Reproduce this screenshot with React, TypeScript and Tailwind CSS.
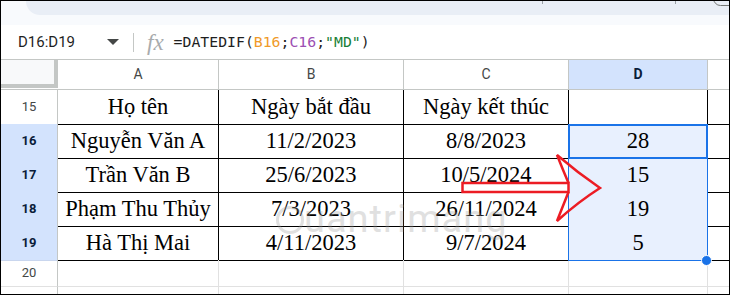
const ui = { fontFamily: 'Roboto, "Noto Sans", Arial, sans-serif' };
const serif = { fontFamily: '"Liberation Serif", "Times New Roman", serif' };
const mono = { fontFamily: '"DejaVu Sans Mono", "Liberation Mono", monospace' };

type Row = { n: number; a: string; b: string; c: string; d: string; sel?: boolean };

const rows: Row[] = [
  { n: 15, a: 'Họ tên', b: 'Ngày bắt đầu', c: 'Ngày kết thúc', d: '' },
  { n: 16, a: 'Nguyễn Văn A', b: '11/2/2023', c: '8/8/2023', d: '28', sel: true },
  { n: 17, a: 'Trần Văn B', b: '25/6/2023', c: '10/5/2024', d: '15', sel: true },
  { n: 18, a: 'Phạm Thu Thủy', b: '7/3/2023', c: '26/11/2024', d: '19', sel: true },
  { n: 19, a: 'Hà Thị Mai', b: '4/11/2023', c: '9/7/2024', d: '5', sel: true },
];

const cols = 'grid grid-cols-[57px_161px_185px_165px_139px_1fr]';

function FormulaBar() {
  return (
    <div className="h-[35px] flex items-center border-b border-[#c4c7c5] bg-white" style={ui}>
      <span className="ml-[17px] w-[88px] text-[15px] text-[#1f1f1f]">D16:D19</span>
      <svg width="12" height="6" viewBox="0 0 12 6" className="ml-[1px]">
        <path d="M0 0 L12 0 L6 6 Z" fill="#444746" />
      </svg>
      <div className="ml-[14px] w-px h-[19px] bg-[#c4c7c5]" />
      <span className="ml-[13px] text-[23px] italic text-[#a8abad] leading-none" style={serif}>
        fx
      </span>
      <span className="ml-[10px] text-[14.8px] text-[#1f1f1f] whitespace-pre" style={mono}>
        =DATEDIF(<span className="text-[#ef9a2a]">B16</span>;<span className="text-[#9c4fb3]">C16</span>;
        <span className="text-[#188038]">"MD"</span>)
      </span>
    </div>
  );
}

function HeaderRow() {
  const letters = ['A', 'B', 'C', 'D'];
  return (
    <div className={`${cols} h-[30px] border-b border-[#c4c7c5]`} style={ui}>
      <div className="bg-[#f8f9fa] border-r-4 border-b-4 border-[#c4c7c5] mb-[1px]" />
      {letters.map((l) => (
        <div
          key={l}
          className={
            l === 'D'
              ? 'flex items-center justify-center border-r border-[#c4c7c5] bg-[#d3e3fd] text-[14px] font-bold text-[#0b1d3a]'
              : 'flex items-center justify-center border-r border-[#c4c7c5] bg-white text-[14px] text-[#444746]'
          }
        >
          {l}
        </div>
      ))}
      <div className="bg-white" />
    </div>
  );
}

function BodyRow({ r }: { r: Row }) {
  const cell = 'flex items-center justify-center border-r border-b border-black text-[22.5px] text-black whitespace-nowrap';
  return (
    <div className={`${cols} h-[34px]`}>
      <div
        className={
          r.sel
            ? 'flex items-center justify-center bg-[#d3e3fd] border-r border-b border-r-[#c4c7c5] border-b-[#c9d6ee] text-[13px] font-bold text-[#0b1d3a]'
            : 'flex items-center justify-center bg-white border-r border-b border-r-[#c4c7c5] border-b-[#e1e1e1] text-[13px] text-[#444746]'
        }
        style={ui}
      >
        {r.n}
      </div>
      <div className={cell} style={serif}>{r.a}</div>
      <div className={cell} style={serif}>{r.b}</div>
      <div className={cell} style={serif}>{r.c}</div>
      <div className={`${cell} ${r.sel ? 'bg-[#e8f0fe]' : 'bg-white'}`} style={serif}>
        {r.d}
      </div>
      <div className="border-b border-black" />
    </div>
  );
}

function EmptyRow({ n, h }: { n: number; h: string }) {
  return (
    <div className={`${cols} ${h}`}>
      <div
        className="flex items-center justify-center border-r border-b border-r-[#c4c7c5] border-b-[#e1e1e1] text-[13px] text-[#444746]"
        style={ui}
      >
        {n}
      </div>
      <div className="border-r border-b border-[#e1e1e1]" />
      <div className="border-r border-b border-[#e1e1e1]" />
      <div className="border-r border-b border-[#e1e1e1]" />
      <div className="border-r border-b border-[#e1e1e1]" />
      <div className="border-b border-[#e1e1e1]" />
    </div>
  );
}

export default function App() {
  return (
    <div className="relative w-[730px] h-[295px] border border-black overflow-hidden bg-white">
      {/* toolbar strip */}
      <div className="relative h-[24px] bg-[#f8fafd]">
        <div className="ml-[25px] h-[14px] bg-[#e9eef6] rounded-bl-[14px]" />
        <div className="absolute left-[541px] top-0 w-px h-[3px] bg-[#9aa0a6]" />
        <div className="absolute left-[674px] top-0 w-px h-[3px] bg-[#9aa0a6]" />
        <div className="absolute left-[712px] top-[-10px] w-[30px] h-[15px] rounded-[8px] border border-[#747775]" />
      </div>
      <FormulaBar />
      <HeaderRow />
      {rows.map((r) => (
        <BodyRow key={r.n} r={r} />
      ))}
      <EmptyRow n={20} h="h-[27px]" />
      <EmptyRow n={21} h="h-[27px]" />

      {/* overlays in page coordinates */}
      <div className="absolute left-[-1px] top-[-1px] w-[730px] h-[295px] pointer-events-none">
        {/* watermark */}
        <div className="absolute left-[276px] top-[200px] flex items-end opacity-30">
          <div className="w-[28px] h-[28px] rounded-full border-[3px] border-[#9a9a9a] mb-[4px]" />
          <span className="text-[38px] leading-none text-[#9a9a9a] tracking-[1px]" style={ui}>
            uantrimang
          </span>
        </div>

        <div className="absolute left-[568px] top-[124px] w-[140px] h-[137px] border border-[#1a73e8]" />
        <div className="absolute left-[568px] top-[124px] w-[140px] h-[35px] border-2 border-[#1a73e8]" />
        <div className="absolute left-[701px] top-[255px] w-[11px] h-[11px] rounded-full bg-[#1a73e8] border border-white" />

        <svg className="absolute left-0 top-0" width="730" height="295" viewBox="0 0 730 295">
          <rect x="462.5" y="183" width="106" height="9" fill="#ffffff" stroke="#ec1c24" strokeWidth="2.5" />
          <path
            d="M568.5 183 Q563 170 557 155 Q578 173 600 188 Q578 202 557 221 Q563 206 568.5 192"
            fill="none"
            stroke="#ec1c24"
            strokeWidth="2.5"
            strokeLinejoin="miter"
          />
        </svg>
      </div>
    </div>
  );
}
